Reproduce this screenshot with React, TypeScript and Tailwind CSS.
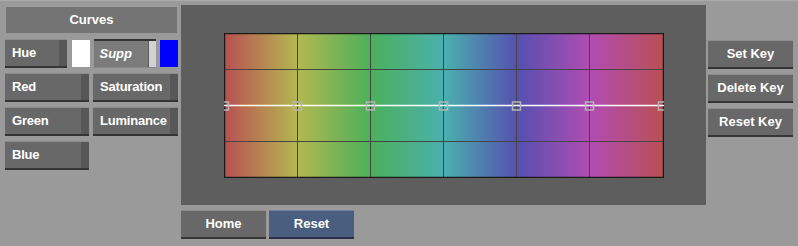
import React from "react";

const font = { fontFamily: '"Liberation Sans", Arial, sans-serif' };

type BtnProps = {
  label: string;
  className?: string;
  strip?: boolean;
};

const PanelButton: React.FC<BtnProps> = ({ label, className = "", strip = true }) => (
  <div
    className={`relative flex h-[29px] items-center border-t border-[#8c8c8c] border-b-2 border-b-[#353535] bg-[#686868] pl-[7px] text-[13px] font-bold text-white ${className}`}
  >
    <span className="tracking-[-0.2px]">{label}</span>
    {strip && <div className="absolute right-0 top-0 bottom-0 w-[8px] bg-[#575757]" />}
  </div>
);

const ActionButton: React.FC<{ label: string; blue?: boolean }> = ({ label, blue }) => (
  <div
    className={`flex h-[29px] w-[85px] items-center justify-center border-t border-b-2 text-[13px] font-bold text-white ${
      blue
        ? "border-t-[#6d83a5] border-b-[#27304a] bg-[#4a5f80]"
        : "border-t-[#8c8c8c] border-b-[#353535] bg-[#686868]"
    }`}
  >
    {label}
  </div>
);

const Graph: React.FC = () => {
  const cols = [0, 73, 146, 219, 292, 365, 438];
  return (
    <svg width="440" height="145" viewBox="0 0 440 145">
      <defs>
        <linearGradient id="hue" x1="0" x2="1" y1="0" y2="0">
          <stop offset="0" stopColor="#b94f52" />
          <stop offset="0.1667" stopColor="#b3b850" />
          <stop offset="0.3333" stopColor="#4bb05a" />
          <stop offset="0.5" stopColor="#4ab0ae" />
          <stop offset="0.6667" stopColor="#5550b0" />
          <stop offset="0.8333" stopColor="#b24cb2" />
          <stop offset="1" stopColor="#b94f52" />
        </linearGradient>
      </defs>
      <rect x="0" y="0" width="440" height="145" fill="url(#hue)" />
      {cols.slice(1, 6).map((x) => (
        <line key={x} x1={x + 0.5} y1="0" x2={x + 0.5} y2="145" stroke="#454545" strokeWidth="1" />
      ))}
      {[36, 72, 108].map((y) => (
        <line key={y} x1="0" y1={y + 0.5} x2="440" y2={y + 0.5} stroke="#454545" strokeWidth="1" />
      ))}
      <rect x="0.5" y="0.5" width="439" height="144" fill="none" stroke="#1a1a1a" strokeWidth="1.5" />
      <line x1="0" y1="72.5" x2="440" y2="72.5" stroke="#ffffff" strokeWidth="1.5" />
      {cols.map((x) => (
        <rect key={x} x={x - 3.5} y="69" width="8" height="8" fill="none" stroke="#b4b4b4" strokeWidth="1.5" />
      ))}
    </svg>
  );
};

export default function App() {
  return (
    <div className="flex h-[246px] w-[798px] border-t border-[#ababab] bg-[#9a9a9a]" style={font}>
      {/* left controls */}
      <div className="ml-[5px] mt-[6px] flex w-[173px] flex-col">
        <div className="ml-[1px] flex h-[26px] w-[171px] items-center justify-center bg-[#747474] text-[13px] font-bold text-white">
          Curves
        </div>
        <div className="mt-[6px] flex flex-col gap-[5px]">
          <div className="flex items-start">
            <PanelButton label="Hue" className="w-[62px]" />
            <div className="ml-[5px] mt-[1px] h-[27px] w-[18px] bg-white" />
            <div className="relative ml-[4px] flex h-[29px] w-[63px] items-center border-t-2 border-[#333] border-b border-b-[#888] bg-[#7b7b7b] pl-[6px] text-[13px] font-bold italic text-white">
              Supp
              <div className="absolute right-0 top-0 bottom-0 w-[8px] border-l border-[#5a5a5a] bg-[#d2d2d2]" />
            </div>
            <div className="ml-[4px] mt-[1px] h-[27px] w-[18px] bg-[#0000ff]" />
          </div>
          <div className="flex gap-[4px]">
            <PanelButton label="Red" className="w-[84px]" />
            <PanelButton label="Saturation" className="w-[85px]" />
          </div>
          <div className="flex gap-[4px]">
            <PanelButton label="Green" className="w-[84px]" />
            <PanelButton label="Luminance" className="w-[85px]" />
          </div>
          <div className="flex gap-[4px]">
            <PanelButton label="Blue" className="w-[84px]" />
          </div>
        </div>
      </div>

      {/* centre graph */}
      <div className="ml-[3px] mt-[4px] flex flex-col">
        <div className="h-[200px] w-[525px] bg-[#5e5e5e] pl-[43px] pt-[28px]">
          <Graph />
        </div>
        <div className="mt-[5px] flex gap-[3px]">
          <ActionButton label="Home" />
          <ActionButton label="Reset" blue />
        </div>
      </div>

      {/* right keys */}
      <div className="ml-[2px] mt-[39px] flex flex-col gap-[5px]">
        <ActionButton label="Set Key" />
        <ActionButton label="Delete Key" />
        <ActionButton label="Reset Key" />
      </div>
    </div>
  );
}
